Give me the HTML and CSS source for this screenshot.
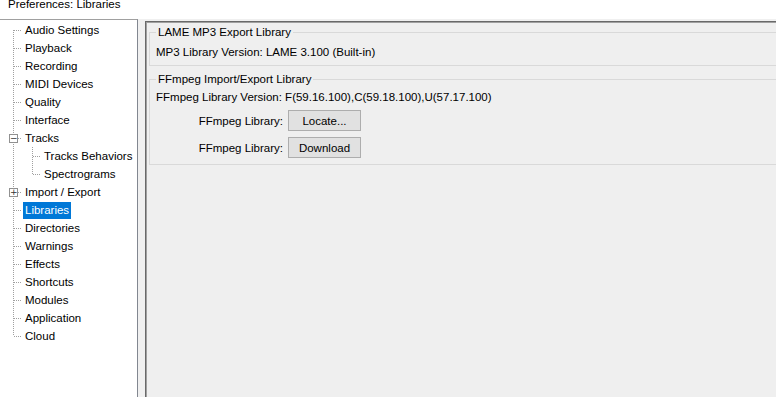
FILE: index.html
```html
<!DOCTYPE html>
<html lang="en">
<head>
  <meta charset="UTF-8" />
  <title>Preferences: Libraries</title>
  <link rel="stylesheet" href="styles.css">
</head>
<body>

  <div id="titulo">
    <h1>Preferences: Libraries</h1>
  </div>

  <div id="janela">
    <div id="arvore">
      <ul class="galhos">
        <li><div class="linha"><span class="ramo"></span><span class="rotulo">Audio Settings</span></div></li>
        <li><div class="linha"><span class="ramo"></span><span class="rotulo">Playback</span></div></li>
        <li><div class="linha"><span class="ramo"></span><span class="rotulo">Recording</span></div></li>
        <li><div class="linha"><span class="ramo"></span><span class="rotulo">MIDI Devices</span></div></li>
        <li><div class="linha"><span class="ramo"></span><span class="rotulo">Quality</span></div></li>
        <li><div class="linha"><span class="ramo"></span><span class="rotulo">Interface</span></div></li>
        <li>
          <div class="linha"><span class="caixa">&minus;</span><span class="ramo curto"></span><span class="rotulo">Tracks</span></div>
          <ul class="galhos filhos">
            <li><div class="linha"><span class="ramo"></span><span class="rotulo">Tracks Behaviors</span></div></li>
            <li><div class="linha"><span class="ramo"></span><span class="rotulo">Spectrograms</span></div></li>
          </ul>
        </li>
        <li><div class="linha"><span class="caixa">+</span><span class="ramo curto"></span><span class="rotulo">Import / Export</span></div></li>
        <li><div class="linha"><span class="ramo"></span><span class="rotulo ativo">Libraries</span></div></li>
        <li><div class="linha"><span class="ramo"></span><span class="rotulo">Directories</span></div></li>
        <li><div class="linha"><span class="ramo"></span><span class="rotulo">Warnings</span></div></li>
        <li><div class="linha"><span class="ramo"></span><span class="rotulo">Effects</span></div></li>
        <li><div class="linha"><span class="ramo"></span><span class="rotulo">Shortcuts</span></div></li>
        <li><div class="linha"><span class="ramo"></span><span class="rotulo">Modules</span></div></li>
        <li><div class="linha"><span class="ramo"></span><span class="rotulo">Application</span></div></li>
        <li><div class="linha"><span class="ramo"></span><span class="rotulo">Cloud</span></div></li>
      </ul>
    </div>

    <div id="painel">
      <fieldset class="grupo primeiro">
        <legend>LAME MP3 Export Library</legend>
        <p>MP3 Library Version: LAME 3.100 (Built-in)</p>
      </fieldset>

      <fieldset class="grupo">
        <legend>FFmpeg Import/Export Library</legend>
        <p>FFmpeg Library Version: F(59.16.100),C(59.18.100),U(57.17.100)</p>
        <div class="botoes">
          <span class="nome">FFmpeg Library:</span>
          <button>Locate...</button>
          <span class="nome">FFmpeg Library:</span>
          <button>Download</button>
        </div>
      </fieldset>
    </div>
  </div>

</body>
</html>
```

FILE: styles.css
```css
* {
  box-sizing: border-box;
}
html, body {
  margin: 0;
  padding: 0;
  height: 100%;
  overflow: hidden;
  font-family: "Liberation Sans", Arial, sans-serif;
  font-size: 11.5px;
  color: #000;
  background: #fff;
}

#titulo {
  height: 19px;
  overflow: hidden;
  background: #fff;
}

#titulo h1 {
  margin: -3px 0 0 8px;
  font-size: 11.5px;
  font-weight: normal;
  line-height: 14px;
}

#janela {
  display: flex;
  height: calc(100% - 19px);
  background: #f0f0f0;
}

#arvore {
  width: 138px;
  flex: none;
  padding-top: 1px;
  background: #fff;
  border-top: 1px solid #a0a0a0;
  border-right: 1px solid #828790;
}

.galhos {
  list-style: none;
  margin: 0 0 0 13px;
  padding: 0;
  background-image: repeating-linear-gradient(to bottom, #a0a0a0 0 1px, transparent 1px 2px);
  background-repeat: no-repeat;
  background-size: 1px calc(100% - 18px);
  background-position: 0 9px;
}

.filhos {
  margin-left: 19px;
  background-position: 0 0;
  background-size: 1px calc(100% - 9px);
}

.linha {
  display: flex;
  align-items: center;
  height: 18px;
}

.ramo {
  width: 8px;
  margin-left: 1px;
  margin-right: 1px;
  height: 1px;
  background-image: repeating-linear-gradient(to right, #a0a0a0 0 1px, transparent 1px 2px);
}

.ramo.curto {
  width: 4px;
  margin-left: 0;
}

.caixa {
  width: 9px;
  height: 9px;
  margin-left: -4px;
  border: 1px solid #919191;
  background: #fff;
  color: #333;
  font-size: 9px;
  line-height: 7px;
  text-align: center;
  font-family: "DejaVu Sans", sans-serif;
}

.rotulo {
  padding: 0 2px;
  line-height: 17px;
  white-space: nowrap;
}

.rotulo.ativo {
  background: #0078d7;
  color: #fff;
}

#painel {
  width: 660px;
  flex: none;
  margin: 2px 0 0 7px;
  padding: 2px 0 0 2px;
  border-left: 1px solid #696969;
  border-top: 1px solid #696969;
  box-shadow: inset 1px 1px 0 #a0a0a0;
  background: #efefef;
}

.grupo {
  margin: 0 0 6px 1px;
  padding: 0 0 6px 6px;
  border: 1px solid #d9d9d9;
  min-width: 0;
}

.grupo.primeiro {
  margin-top: 1px;
  padding-bottom: 6px;
}

.grupo legend {
  padding: 0 2px;
  line-height: 14px;
}

.grupo p {
  margin: 4px 0 0 0;
  line-height: 14px;
}

.grupo.primeiro p {
  margin-top: 6px;
}

.botoes {
  display: grid;
  grid-template-columns: 127px 73px;
  column-gap: 5px;
  row-gap: 6px;
  align-items: center;
  margin-top: 6px;
}

.nome {
  text-align: right;
  white-space: nowrap;
}

.botoes button {
  height: 21px;
  padding: 0;
  border: 1px solid #adadad;
  background: #e1e1e1;
  font-family: inherit;
  font-size: 11.5px;
  color: #000;
}
```
